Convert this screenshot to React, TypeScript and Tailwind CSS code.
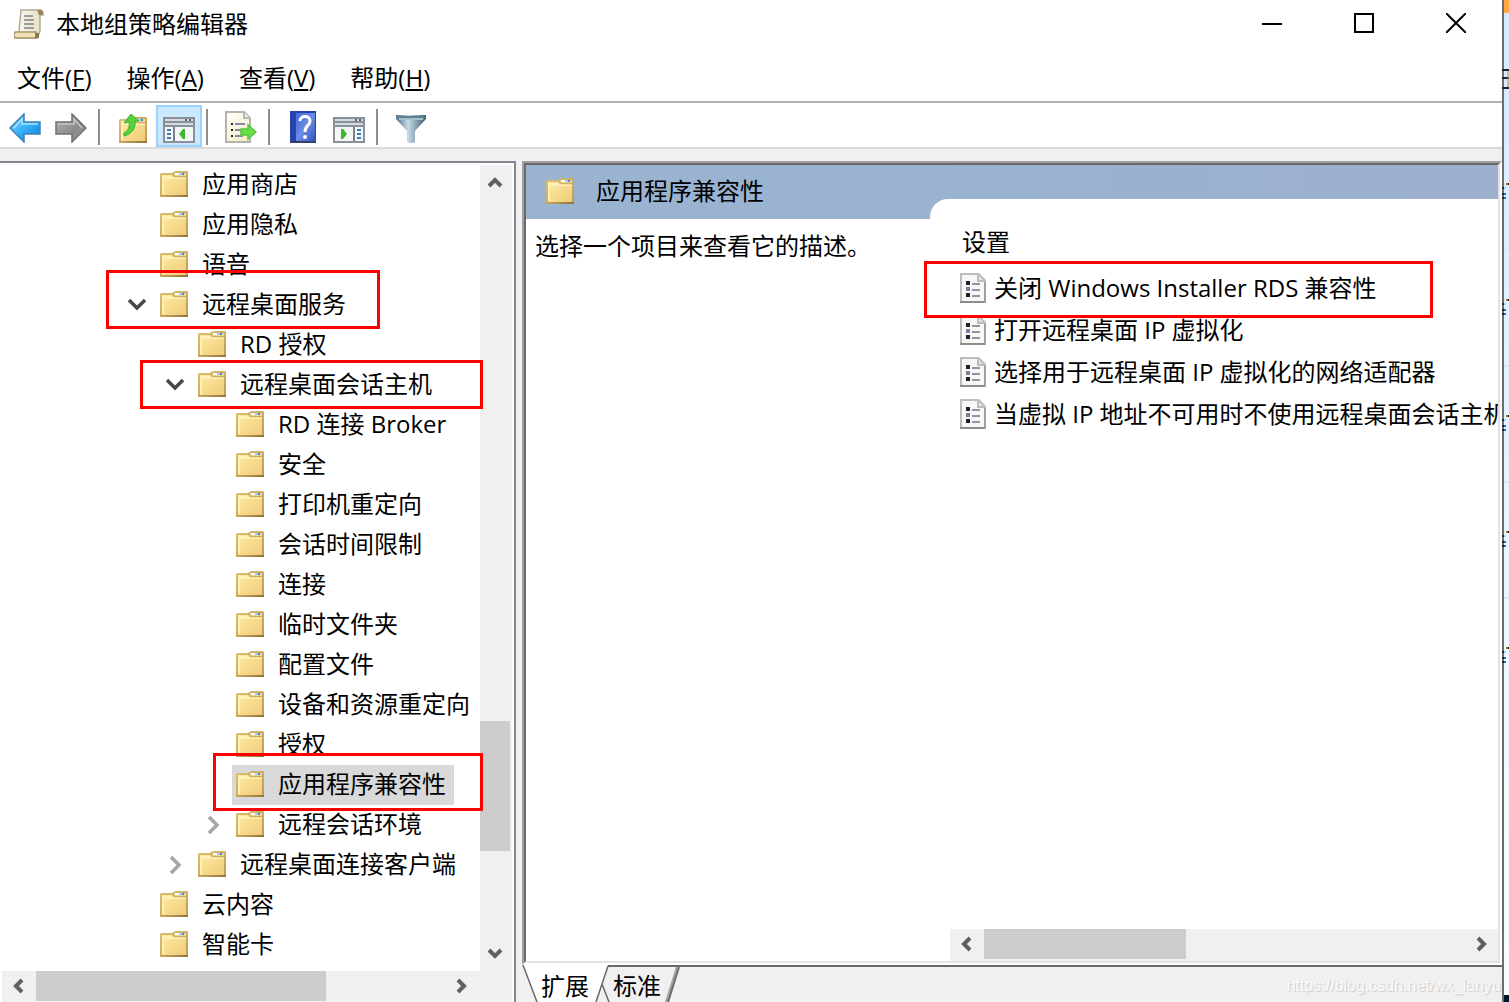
import type { ReactNode } from "react";
import { clsx } from "clsx";

interface TreeNode {
  label: string;
  level: 0 | 1 | 2;
  state?: "open" | "closed";
  selected?: boolean;
  mark?: string;
}

const TREE: TreeNode[] = [
  { label: "应用商店", level: 0 },
  { label: "应用隐私", level: 0 },
  { label: "语音", level: 0 },
  {
    label: "远程桌面服务",
    level: 0,
    state: "open",
    mark: "left-[106px] -top-[15px] w-[274px] h-[59px]",
  },
  { label: "RD 授权", level: 1 },
  {
    label: "远程桌面会话主机",
    level: 1,
    state: "open",
    mark: "left-[140px] -top-[5px] w-[343px] h-[49px]",
  },
  { label: "RD 连接 Broker", level: 2 },
  { label: "安全", level: 2 },
  { label: "打印机重定向", level: 2 },
  { label: "会话时间限制", level: 2 },
  { label: "连接", level: 2 },
  { label: "临时文件夹", level: 2 },
  { label: "配置文件", level: 2 },
  { label: "设备和资源重定向", level: 2 },
  { label: "授权", level: 2 },
  {
    label: "应用程序兼容性",
    level: 2,
    selected: true,
    mark: "left-[213px] -top-[12px] w-[270px] h-[58px]",
  },
  { label: "远程会话环境", level: 2, state: "closed" },
  { label: "远程桌面连接客户端", level: 1, state: "closed" },
  { label: "云内容", level: 0 },
  { label: "智能卡", level: 0 },
];

const SETTINGS = [
  { name: "关闭 Windows Installer RDS 兼容性", marked: true },
  { name: "打开远程桌面 IP 虚拟化", marked: false },
  { name: "选择用于远程桌面 IP 虚拟化的网络适配器", marked: false },
  { name: "当虚拟 IP 地址不可用时不使用远程桌面会话主机", marked: false },
];

const MENUS = [
  { label: "文件", accel: "F" },
  { label: "操作", accel: "A" },
  { label: "查看", accel: "V" },
  { label: "帮助", accel: "H" },
];

const INDENT = {
  0: "pl-[120px]",
  1: "pl-[158px]",
  2: "pl-[196px]",
};

function FolderShape() {
  return (
    <>
      <path d="M0 3 L1 2 H12 L13 1 H14 L15 0 H27 L28 1 V26 H0Z" fill="url(#folderEdge)" />
      <path d="M2 4 H12 L14 6 H26 V24 H2Z" fill="url(#folderFill)" />
      <path d="M2 5 H12 L14 7 H26 V8 H4 V23 H2Z" fill="#fff0b8" />
      <path d="M14 2 H26 V5 H15Z" fill="#f0d48c" />
      <path d="M15 2 H24 V4 H15Z" fill="#ffffff" />
      <path d="M19 2 H22 V4 H19Z" fill="#9fd4f4" />
      <path d="M22 2 H24 V4 H22Z" fill="#3f88d8" />
      <path d="M0 24 H28 V26 H0Z" fill="url(#folderBase)" />
    </>
  );
}

function FolderIcon() {
  return (
    <svg width="28" height="26" viewBox="0 0 28 26" className="shrink-0" aria-hidden="true">
      <FolderShape />
    </svg>
  );
}

function SettingIcon() {
  return (
    <svg width="26" height="30" viewBox="0 0 26 30" className="shrink-0" aria-hidden="true">
      <path d="M0 0 H19 L26 7 V30 H0Z" fill="#bcbcbc" />
      <path d="M2 2 H17 V9 H24 V28 H2Z" fill="#f7f7f5" />
      <path d="M19 3 L23 7 H19Z" fill="#e6e6e6" />
      <path d="M0 28 H26 V30 H0Z" fill="#8c8c8c" />
      <path d="M24 9 H26 V30 H24Z" fill="#a0a0a0" />
      <path d="M6 8 H10 V12 H6Z M6 20 H10 V24 H6Z" fill="#1e1e28" />
      <path d="M6 14 H10 V18 H6Z" fill="#7d7f9c" />
      <path d="M12 10 H20 V12 H12Z M12 16 H20 V18 H12Z M12 22 H20 V24 H12Z" fill="#9492ac" />
    </svg>
  );
}

type Direction = "up" | "down" | "left" | "right";

const ARROWS: Record<Direction, string> = {
  up: "M2 11 L8 5 L14 11",
  down: "M2 5 L8 11 L14 5",
  left: "M11 2 L5 8 L11 14",
  right: "M5 2 L11 8 L5 14",
};

function Arrow({ dir }: { dir: Direction }) {
  return (
    <svg width="16" height="16" viewBox="0 0 16 16" aria-hidden="true">
      <path d={ARROWS[dir]} fill="none" stroke="#606060" strokeWidth="4" />
    </svg>
  );
}

function TreeChevron({ open }: { open: boolean }) {
  return (
    <svg width="20" height="20" viewBox="0 0 20 20" aria-hidden="true">
      <path
        d={open ? "M1 6 L9 14 L17 6" : "M5 3 L13 11 L5 19"}
        fill="none"
        stroke={open ? "#484848" : "#a6a6a6"}
        strokeWidth="3.5"
      />
    </svg>
  );
}

function Gradients() {
  return (
    <svg width="0" height="0" className="absolute" aria-hidden="true">
      <defs>
        <linearGradient id="folderFill" x1="0" y1="0" x2="1" y2="1">
          <stop offset="0" stopColor="#ffeaa2" />
          <stop offset="1" stopColor="#efcb78" />
        </linearGradient>
        <linearGradient id="folderEdge" x1="0" y1="0" x2="1" y2="1">
          <stop offset="0" stopColor="#dcc078" />
          <stop offset="1" stopColor="#bc9a54" />
        </linearGradient>
        <linearGradient id="folderBase" x1="0" y1="0" x2="1" y2="0">
          <stop offset="0" stopColor="#c8a862" />
          <stop offset="1" stopColor="#917238" />
        </linearGradient>
        <linearGradient id="blueArrow" x1="0" y1="0" x2="1" y2="1">
          <stop offset="0" stopColor="#8ed8ff" />
          <stop offset="0.5" stopColor="#35b0f8" />
          <stop offset="1" stopColor="#0a7fd6" />
        </linearGradient>
        <linearGradient id="grayArrow" x1="0" y1="0" x2="1" y2="1">
          <stop offset="0" stopColor="#b4b4b4" />
          <stop offset="0.6" stopColor="#8a8a8a" />
          <stop offset="1" stopColor="#a0a0a0" />
        </linearGradient>
        <linearGradient id="paper" x1="0" y1="0" x2="1" y2="1">
          <stop offset="0" stopColor="#ffffff" />
          <stop offset="1" stopColor="#f4ebc0" />
        </linearGradient>
        <linearGradient id="helpFill" x1="0" y1="0" x2="1" y2="1">
          <stop offset="0" stopColor="#4468d8" />
          <stop offset="0.5" stopColor="#6d8ce6" />
          <stop offset="1" stopColor="#3454b8" />
        </linearGradient>
        <linearGradient id="funnel" x1="0" y1="0" x2="1" y2="0">
          <stop offset="0" stopColor="#4e6f86" />
          <stop offset="0.4" stopColor="#c4dce8" />
          <stop offset="1" stopColor="#3f5d72" />
        </linearGradient>
        <linearGradient id="scroll" x1="0" y1="0" x2="1" y2="0">
          <stop offset="0" stopColor="#faf8f0" />
          <stop offset="1" stopColor="#e6dcc0" />
        </linearGradient>
      </defs>
    </svg>
  );
}

function ScrollIcon() {
  return (
    <svg width="30" height="30" viewBox="0 0 30 30" className="shrink-0" aria-hidden="true">
      <path d="M7 1 H27 L29 3 V6 H26 V22 L23 29 H4 L5 22Z" fill="url(#scroll)" stroke="#b5ab94" strokeWidth="1.5" />
      <path d="M23 1 H27 L29 3 V6 H25Z" fill="#9a855c" />
      <path d="M1 23 H22 V25 L24 28 L22 29 H1 L0 26Z" fill="#f0e2b4" stroke="#a89668" strokeWidth="1.5" />
      <path d="M21 24 H25 V29 H21Z" fill="#8d7a52" />
      <path d="M10 7 H19 M10 11 H20 M10 15 H20 M10 19 H20" stroke="#9c9c9c" strokeWidth="2" />
    </svg>
  );
}

function BackIcon() {
  return (
    <svg width="32" height="30" viewBox="0 0 32 30" aria-hidden="true">
      <path d="M1 15 L15 1 V9 H31 V21 H15 V29Z" fill="url(#blueArrow)" stroke="#3b82b8" strokeWidth="1.5" />
      <path d="M5 15 L13 6 V11 H29" fill="none" stroke="#a8e2ff" strokeWidth="1.5" />
    </svg>
  );
}

function ForwardIcon() {
  return (
    <svg width="32" height="30" viewBox="0 0 32 30" aria-hidden="true">
      <path d="M31 15 L17 1 V9 H1 V21 H17 V29Z" fill="url(#grayArrow)" stroke="#707070" strokeWidth="1.5" />
      <path d="M3 11 H19 V6 L27 15" fill="none" stroke="#c4c4c4" strokeWidth="1.5" />
    </svg>
  );
}

function FolderUpIcon() {
  return (
    <svg width="28" height="30" viewBox="0 0 28 30" aria-hidden="true">
      <g transform="translate(0 4)">
        <FolderShape />
      </g>
      <path
        d="M12 1 L20 8 H16 C17 15 13 21 5 23 V20 C9 18 11 14 10 9 L5 10Z"
        fill="#55d23c"
        stroke="#3fae2e"
        strokeWidth="1"
      />
    </svg>
  );
}

function PaneIcon({ flip = false }: { flip?: boolean }) {
  return (
    <svg width="32" height="26" viewBox="0 0 32 26" aria-hidden="true">
      <path d="M0 0 H32 V26 H0Z" fill="#8a9097" />
      <path d="M2 2 H30 V4 H2Z M2 6 H30 V8 H2Z" fill="#d5dbe4" />
      <path d="M22 2 H24 V4 H22Z M26 2 H28 V4 H26Z" fill="#5b6675" />
      <path d="M2 10 H30 V24 H2Z" fill="#f5f6f6" />
      {flip ? (
        <>
          <path d="M20 10 H22 V24 H20Z" fill="#76818f" />
          <path d="M24 12 H28 V14 H24Z M24 16 H28 V18 H24Z M24 20 H28 V22 H24Z" fill="#3b78b8" />
          <path d="M8 12 H10 L14 17 L10 22 H8Z" fill="#3eb52a" />
        </>
      ) : (
        <>
          <path d="M10 10 H12 V24 H10Z" fill="#76818f" />
          <path d="M4 12 H8 V14 H4Z M4 16 H8 V18 H4Z M4 20 H8 V22 H4Z" fill="#3b78b8" />
          <path d="M22 12 H20 L16 17 L20 22 H22Z" fill="#3eb52a" />
        </>
      )}
    </svg>
  );
}

function ExportIcon() {
  return (
    <svg width="32" height="32" viewBox="0 0 32 32" aria-hidden="true">
      <path d="M1 1 H19 L25 7 V31 H1Z" fill="url(#paper)" stroke="#b4b2aa" strokeWidth="2" />
      <path d="M19 1 V7 H25" fill="#eeeeee" stroke="#b8b8b8" strokeWidth="2" />
      <path d="M6 12 H8 V14 H6Z M6 18 H8 V20 H6Z M6 24 H8 V26 H6Z" fill="#222" />
      <path d="M10 12 H20 V14 H10Z M10 18 H18 V20 H10Z M10 24 H18 V26 H10Z" fill="#8b84a2" />
      <path d="M16 18 H23 V14 L31 21 L23 28 V24 H16Z" fill="#6adf48" stroke="#58c840" strokeWidth="1.5" />
    </svg>
  );
}

function HelpIcon() {
  return (
    <svg width="26" height="32" viewBox="0 0 26 32" aria-hidden="true">
      <path d="M0 0 H26 V32 H0Z" fill="#2443ac" />
      <path d="M6 2 H25 V30 H6Z" fill="url(#helpFill)" />
      <path d="M0 30 H26 V32 H0Z" fill="#353f70" />
      <path
        d="M10 10 C10 4 20 4 20 10 C20 15 15 14 15 21"
        fill="none"
        stroke="#ffffff"
        strokeWidth="3"
      />
      <circle cx="15" cy="26" r="2" fill="#ffffff" />
    </svg>
  );
}

function FilterIcon() {
  return (
    <svg width="30" height="28" viewBox="0 0 30 28" aria-hidden="true">
      <path d="M0 0 H30 V4 L19 16 V27 L17 28 H12 L11 26 V16 L0 4Z" fill="url(#funnel)" />
      <path d="M1 1 H29 V3 H1Z" fill="#5f7e92" />
      <path d="M3 4 H27" stroke="#a6c0ce" strokeWidth="2" />
    </svg>
  );
}

function ToolButton({ label, active, children }: { label: string; active?: boolean; children: ReactNode }) {
  return (
    <button
      type="button"
      aria-label={label}
      className={clsx(
        "flex h-[42px] w-[46px] items-end justify-center border-2 pb-[2px]",
        active ? "border-[#99d1ff] bg-[#cce8ff]" : "border-transparent",
      )}
    >
      {children}
    </button>
  );
}

function ToolSeparator() {
  return <span className="ml-1 mr-[10px] mt-1 h-9 w-[2px] bg-[#8d8d8d]" />;
}

function TreeItem({ node }: { node: TreeNode }) {
  return (
    <li className={clsx("relative flex h-10 items-center", INDENT[node.level])}>
      {node.state ? (
        <button type="button" aria-label={`展开 ${node.label}`} className="flex w-9 justify-center pb-[2px]">
          <TreeChevron open={node.state === "open"} />
        </button>
      ) : (
        <span className="w-9" />
      )}
      <span
        className={clsx(
          "flex h-10 items-center gap-[14px] whitespace-nowrap pb-[2px] pl-1 pr-2",
          node.selected && "bg-[#d9d9d9]",
        )}
      >
        <FolderIcon />
        {node.label}
      </span>
      {node.mark && (
        <span className={clsx("pointer-events-none absolute z-10 border-[3px] border-[#ff0000]", node.mark)} />
      )}
    </li>
  );
}

function TreePane() {
  return (
    <nav className="flex w-[516px] shrink-0 flex-col border-r-2 border-t-2 border-[#828790] bg-white pt-[2px]">
      <div className="flex min-h-0 flex-1">
        <ul className="min-w-0 flex-1">
          {TREE.map((node) => (
            <TreeItem key={node.label} node={node} />
          ))}
        </ul>
        <div className="mr-[2px] flex w-8 flex-col bg-[#f0f0f0]">
          <button type="button" aria-label="向上滚动" className="flex h-9 w-[30px] items-center justify-center">
            <Arrow dir="up" />
          </button>
          <div className="flex-[520]" />
          <div className="h-[130px] w-[30px] bg-[#cdcdcd]" />
          <div className="flex-[84]" />
          <button type="button" aria-label="向下滚动" className="flex h-9 w-[30px] items-center justify-center">
            <Arrow dir="down" />
          </button>
        </div>
      </div>
      <div className="mx-[2px] flex h-[31px] shrink-0 bg-[#f0f0f0]">
        <button type="button" aria-label="向左滚动" className="flex h-[30px] w-[34px] items-center justify-center">
          <Arrow dir="left" />
        </button>
        <div className="h-[30px] w-[290px] bg-[#cdcdcd]" />
        <button
          type="button"
          aria-label="向右滚动"
          className="ml-auto mr-[34px] flex h-[30px] w-[34px] items-center justify-center"
        >
          <Arrow dir="right" />
        </button>
      </div>
    </nav>
  );
}

function SettingsTable() {
  return (
    <table className="ml-[30px] mt-6">
      <thead>
        <tr>
          <th className="h-[46px] whitespace-nowrap pb-1 pl-[2px] text-left font-normal">设置</th>
        </tr>
      </thead>
      <tbody>
        {SETTINGS.map((s) => (
          <tr key={s.name}>
            <td className="relative h-[42px] p-0">
              <span className="flex items-center gap-2 whitespace-nowrap">
                <SettingIcon />
                {s.name}
              </span>
              {s.marked && (
                <span className="pointer-events-none absolute -left-9 -top-[6px] z-10 h-[57px] w-[509px] border-[3px] border-[#ff0000]" />
              )}
            </td>
          </tr>
        ))}
      </tbody>
    </table>
  );
}

function DetailPane() {
  return (
    <section className="flex min-h-0 flex-1 border-2 border-b-white border-l-[#a0a0a0] border-r-white border-t-[#a0a0a0]">
      <div className="flex min-w-0 flex-1 overflow-hidden border-2 border-b-[#e3e3e3] border-l-[#696969] border-r-[#e3e3e3] border-t-[#696969] bg-white">
        <div className="w-[404px] shrink-0">
          <h2 className="flex h-[54px] items-center gap-[22px] bg-[#99b3d0] pb-[2px] pl-5">
            <FolderIcon />
            应用程序兼容性
          </h2>
          <p className="pl-[9px] pt-[9px]">选择一个项目来查看它的描述。</p>
        </div>
        <div className="flex min-w-0 flex-1 flex-col">
          <div className="h-[34px] shrink-0 bg-linear-to-r from-[#99b3d0] to-[#9db0cd]" />
          <div className="h-0">
            <div className="h-5 w-5 bg-[#99b3d0]" />
          </div>
          <div className="flex min-h-0 flex-1 flex-col rounded-tl-[18px] bg-white">
            <div className="-mt-[2px] min-h-0 flex-1">
              <SettingsTable />
            </div>
            <div className="ml-5 flex h-8 shrink-0 bg-[#f0f0f0]">
              <button type="button" aria-label="向左滚动" className="flex h-[30px] w-[34px] items-center justify-center">
                <Arrow dir="left" />
              </button>
              <div className="h-[30px] w-[202px] bg-[#cdcdcd]" />
              <button
                type="button"
                aria-label="向右滚动"
                className="ml-auto flex h-[30px] w-[34px] items-center justify-center"
              >
                <Arrow dir="right" />
              </button>
            </div>
          </div>
        </div>
      </div>
    </section>
  );
}

function ViewTabs() {
  return (
    <div className="relative flex h-[37px] shrink-0">
      <svg width="160" height="37" viewBox="0 0 160 37" className="absolute left-0 top-0" aria-hidden="true">
        <path d="M0 0 H87 L73 37 H15Z" fill="#ffffff" />
        <path d="M1 0 L15 37 M74 37 L86 1 M80 19 L87 37" fill="none" stroke="#696969" strokeWidth="1.5" />
        <path d="M86 1 H160" stroke="#696969" strokeWidth="2" />
        <path d="M155 2 L144 37" stroke="#a0a0a0" strokeWidth="2" />
        <path d="M157 2 L146 37" stroke="#696969" strokeWidth="2" />
      </svg>
      <div className="relative flex w-[160px] items-center gap-6 pl-[19px] pt-1">
        <button type="button">扩展</button>
        <button type="button">标准</button>
      </div>
      <div className="flex-1 border-t-2 border-[#696969]" />
    </div>
  );
}

// sliver of the window that sits behind this one
function BackdropStrip() {
  return (
    <div className="flex w-[5px] shrink-0 flex-col bg-linear-to-b from-[#d6eaff] via-[#eaf4ff] to-[#fcfeff]">
      <div className="h-[13px] bg-[#ffa940]" />
      <svg width="7" height="700" viewBox="0 0 7 700" className="-ml-[2px] shrink-0" aria-hidden="true">
        <path d="M0 57 H7 M0 65 H7 M0 75 H7" stroke="#20222c" strokeWidth="2" />
        <path d="M6 58 V74" stroke="#c08a3e" strokeWidth="1" />
        {[0, 1, 2, 3, 4].map((i) => (
          <g key={i} transform={`translate(0 ${i * 116})`}>
            <path d="M4 171 H6" stroke="#b06a1c" strokeWidth="2" />
            <path d="M6 171 H7" stroke="#222" strokeWidth="2" />
            <path d="M0 175 H2 M0 181 H2 M0 185 H2" stroke="#20242c" strokeWidth="2" />
            <path d="M2 175 H4" stroke="#9cdcff" strokeWidth="2" />
            <path d="M2 181 H4 M2 185 H4" stroke="#2b6cb0" strokeWidth="2" />
            <path d="M2 237 H7" stroke="#dde8f4" strokeWidth="2" />
          </g>
        ))}
      </svg>
      <div className="mt-auto h-[7px] bg-[#001428]" />
    </div>
  );
}

export default function App() {
  return (
    <div className="relative flex h-screen overflow-hidden bg-white font-['Open_Sans','Noto_Sans_CJK_SC',sans-serif] text-[24px] leading-9 text-black">
      <Gradients />
      <div className="flex min-w-0 flex-1 flex-col border-r-2 border-[#6a6d72] bg-[#f0f0f0]">
        <header className="flex h-12 shrink-0 items-center bg-white pl-[14px]">
          <ScrollIcon />
          <h1 className="ml-3">本地组策略编辑器</h1>
          <div className="ml-auto flex h-full">
            <button type="button" aria-label="最小化" className="flex w-[92px] justify-center pt-[13px]">
              <svg width="20" height="20" viewBox="0 0 20 20" aria-hidden="true">
                <path d="M0 11 H20" stroke="#000" strokeWidth="2" />
              </svg>
            </button>
            <button type="button" aria-label="最大化" className="flex w-[92px] justify-center pt-[13px]">
              <svg width="20" height="20" viewBox="0 0 20 20" aria-hidden="true">
                <path d="M1 1 H19 V19 H1Z" fill="none" stroke="#000" strokeWidth="2" />
              </svg>
            </button>
            <button type="button" aria-label="关闭" className="flex w-[92px] justify-center pt-[13px]">
              <svg width="20" height="20" viewBox="0 0 20 20" aria-hidden="true">
                <path d="M0 0 L20 20 M20 0 L0 20" stroke="#000" strokeWidth="2" />
              </svg>
            </button>
          </div>
        </header>

        <div className="flex h-[55px] shrink-0 items-center gap-[35px] border-b-2 border-[#b0b0b0] bg-white pl-[17px] pt-[6px]">
          {MENUS.map((m) => (
            <button key={m.accel} type="button" className="whitespace-nowrap">
              {m.label}(<span className="underline decoration-2 underline-offset-2">{m.accel}</span>)
            </button>
          ))}
        </div>

        <div className="flex h-[46px] shrink-0 border-b-2 border-[#dadada] bg-white pl-[2px] pt-[2px]">
          <ToolButton label="后退">
            <BackIcon />
          </ToolButton>
          <ToolButton label="前进">
            <ForwardIcon />
          </ToolButton>
          <ToolSeparator />
          <ToolButton label="上一级">
            <FolderUpIcon />
          </ToolButton>
          <ToolButton label="显示/隐藏控制台树" active>
            <PaneIcon />
          </ToolButton>
          <ToolSeparator />
          <ToolButton label="导出列表">
            <ExportIcon />
          </ToolButton>
          <ToolSeparator />
          <ToolButton label="帮助">
            <HelpIcon />
          </ToolButton>
          <ToolButton label="显示/隐藏操作窗格">
            <PaneIcon flip />
          </ToolButton>
          <ToolSeparator />
          <ToolButton label="筛选器">
            <FilterIcon />
          </ToolButton>
        </div>

        <main className="flex min-h-0 flex-1 gap-[6px] pt-3">
          <TreePane />
          <div className="flex min-w-0 flex-1 flex-col">
            <DetailPane />
            <ViewTabs />
          </div>
        </main>
      </div>
      <BackdropStrip />
      <span className="absolute bottom-1 right-2 font-['Liberation_Sans',sans-serif] text-[16px] leading-6 text-[#fafafa] [text-shadow:1px_1px_1px_#c8c8c8]">
        https://blog.csdn.net/wx_lanyu
      </span>
    </div>
  );
}
